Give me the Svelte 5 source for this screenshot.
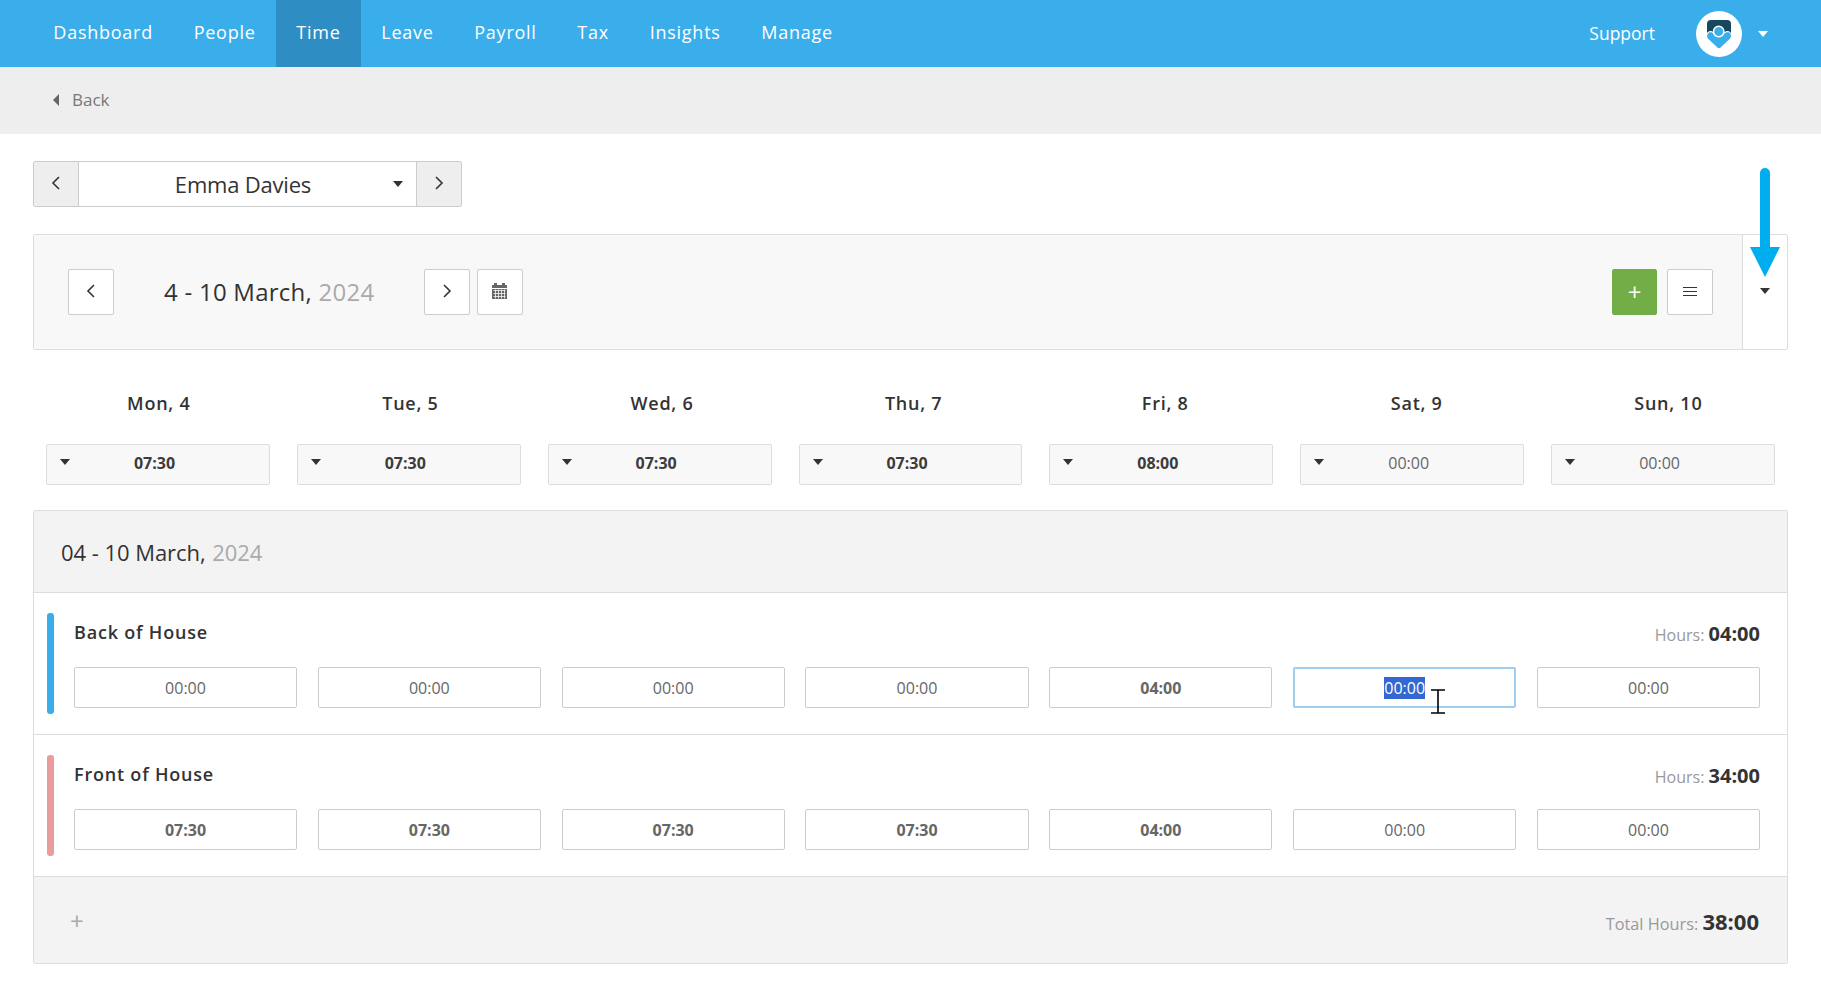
<script>
  const nav = ['Dashboard', 'People', 'Time', 'Leave', 'Payroll', 'Tax', 'Insights', 'Manage'];
  const days = [
    { label: 'Mon, 4', total: '07:30' },
    { label: 'Tue, 5', total: '07:30' },
    { label: 'Wed, 6', total: '07:30' },
    { label: 'Thu, 7', total: '07:30' },
    { label: 'Fri, 8', total: '08:00' },
    { label: 'Sat, 9', total: '00:00' },
    { label: 'Sun, 10', total: '00:00' }
  ];
  const rows = [
    { name: 'Back of House', color: '#3aaeeb', hours: '04:00', times: ['00:00', '00:00', '00:00', '00:00', '04:00', '00:00', '00:00'], selected: 5 },
    { name: 'Front of House', color: '#e89c9c', hours: '34:00', times: ['07:30', '07:30', '07:30', '07:30', '04:00', '00:00', '00:00'], selected: -1 }
  ];
</script>

<header class="topbar">
  <nav class="nav">
    {#each nav as item}
      <a class="nav-item" class:active={item === 'Time'} href="#top">{item}</a>
    {/each}
  </nav>
  <div class="account">
    <span class="support">Support</span>
    <span class="avatar">
      <svg width="46" height="46" viewBox="0 0 46 46">
        <circle cx="23" cy="23" r="23" fill="#fff" />
        <path d="M11 13q0-4 4-4h16q4 0 4 4v11H11z" fill="#17465f" />
        <path d="M10.500 25a4.500 4.500 0 0 1 4.500-4.500L23 24l8-3.500a4.500 4.500 0 0 1 4.500 4.500q0 2-1.500 3.500L25 37q-2 1.800-4 0l-9-8.500q-1.500-1.500-1.500-3.500z" fill="#3aaeeb" stroke="#fff" stroke-width="1.200" />
        <circle cx="22.700" cy="20.500" r="5.200" fill="#3aaeeb" stroke="#fff" stroke-width="1.500" />
      </svg>
    </span>
    <span class="caret white"></span>
  </div>
</header>

<div class="backbar"><span class="back-arrow"></span>Back</div>

<main class="page">
  <div class="employee">
    <button class="side-btn" aria-label="Previous"><svg width="10" height="14" viewBox="0 0 10 14"><path d="M8 1L2 7l6 6" /></svg></button>
    <div class="employee-name">Emma Davies<span class="caret small"></span></div>
    <button class="side-btn" aria-label="Next"><svg width="10" height="14" viewBox="0 0 10 14"><path d="M2 1l6 6-6 6" /></svg></button>
  </div>

  <section class="week">
    <div class="week-main">
      <button class="square" aria-label="Previous week"><svg width="10" height="14" viewBox="0 0 10 14"><path d="M8 1L2 7l6 6" /></svg></button>
      <h2 class="week-title">4 - 10 March, <span class="year">2024</span></h2>
      <button class="square" aria-label="Next week"><svg width="10" height="14" viewBox="0 0 10 14"><path d="M2 1l6 6-6 6" /></svg></button>
      <button class="square" aria-label="Calendar">
        <svg class="cal" width="15" height="16" viewBox="0 0 15 16">
          <path d="M2 0h3v2h5V0h3v2h2v3H0V2h2z" />
          <path d="M0 6h15v10H0z" />
          <path d="M1.500 7.500h12M1.500 10.500h12M1.500 13.500h12M3.500 6.500v9M6.500 6.500v9M9.500 6.500v9M12.500 6.500v9" />
        </svg>
      </button>
      <div class="week-actions">
        <button class="square green" aria-label="Add">+</button>
        <button class="square" aria-label="Menu"><svg class="lines" width="14" height="10" viewBox="0 0 14 10"><path d="M0 1h14M0 5h14M0 9h14" /></svg></button>
      </div>
    </div>
    <div class="week-side"><span class="caret"></span></div>
  </section>

  <div class="day-labels">
    {#each days as day}
      <div class="day-label">{day.label}</div>
    {/each}
  </div>
  <div class="days">
    {#each days as day}
      <div class="day-total" class:strong={day.total !== '00:00'}><span class="caret"></span>{day.total}</div>
    {/each}
  </div>

  <section class="panel">
    <div class="panel-head">04 - 10 March, <span class="year">2024</span></div>
    {#each rows as row}
      <div class="row">
        <span class="row-bar" style="background:{row.color}"></span>
        <div class="row-body">
          <div class="row-top">
            <span class="row-name">{row.name}</span>
            <span class="row-hours">Hours: <b>{row.hours}</b></span>
          </div>
          <div class="cells">
            {#each row.times as time, i}
              <div class="cell" class:strong={time !== '00:00'} class:focused={i === row.selected}>
                {#if i === row.selected}<span class="sel">{time}</span>{:else}{time}{/if}
              </div>
            {/each}
          </div>
        </div>
      </div>
    {/each}
    <div class="panel-foot">
      <span class="foot-add">+</span>
      <span class="total">Total Hours: <b>38:00</b></span>
    </div>
  </section>
</main>

<!-- annotation arrow and mouse cursor drawn over the screenshot -->
<svg class="arrow" width="30" height="110" viewBox="0 0 30 110">
  <path d="M15 5v80" stroke="#00aeef" stroke-width="10" stroke-linecap="round" />
  <path d="M0 79h30L15 109z" fill="#00aeef" />
</svg>
<svg class="ibeam" width="14" height="25" viewBox="0 0 14 25">
  <path d="M0 1h14M0 24h14M7 1v23" stroke="#000" stroke-width="1.600" fill="none" />
</svg>

<style>
  :global(body) {
    margin: 0;
    background: #fff;
    font-family: "Open Sans", "Noto Sans", sans-serif;
    color: #333;
  }
  button {
    font-family: inherit;
    padding: 0;
    cursor: pointer;
  }
  button svg path {
    stroke: #333;
    stroke-width: 1.600;
    fill: none;
  }
  button svg.lines {
    shape-rendering: crispEdges;
  }
  button svg.lines path {
    stroke: #333;
    stroke-width: 1;
  }
  button svg.cal {
    margin-right: 2px;
  }
  button svg.cal path:nth-child(-n+2) {
    stroke: none;
    fill: #666;
  }
  button svg.cal path:nth-child(3) {
    stroke: #f8f8f8;
    stroke-width: 0.800;
  }
  .topbar {
    height: 67px;
    background: #3aaeeb;
    display: flex;
    justify-content: space-between;
    align-items: center;
    color: #fff;
  }
  .nav {
    display: flex;
    padding-left: 33px;
    height: 100%;
  }
  .nav-item {
    display: flex;
    align-items: center;
    padding: 0 20.350px 3px;
    font-size: 18px;
    letter-spacing: 0.75px;
    color: #fff;
    text-decoration: none;
  }
  .nav-item.active {
    background: #2e8ec3;
  }
  .account {
    display: flex;
    align-items: center;
    padding-right: 53px;
  }
  .support {
    font-size: 17.500px;
    margin-right: 41px;
    padding-bottom: 2px;
  }
  .avatar {
    display: block;
    height: 46px;
    margin-right: 16px;
  }
  .caret {
    display: inline-block;
    border-left: 5px solid transparent;
    border-right: 5px solid transparent;
    border-top: 6px solid #333;
  }
  .caret.white {
    border-top-color: #fff;
  }
  .backbar {
    height: 67px;
    background: #eee;
    display: flex;
    align-items: center;
    padding: 0 0 2px 53px;
    box-sizing: border-box;
    font-size: 17px;
    color: #777;
  }
  .back-arrow {
    border-top: 6px solid transparent;
    border-bottom: 6px solid transparent;
    border-right: 6px solid #666;
    margin-right: 13px;
  }
  .page {
    padding: 27px 33px 0;
  }
  .employee {
    display: flex;
    width: 429px;
    height: 46px;
    border: 1px solid #ccc;
    border-radius: 2px;
    box-sizing: border-box;
  }
  .side-btn {
    width: 44px;
    border: 0;
    background: #eee;
    display: flex;
    align-items: center;
    justify-content: center;
    padding-bottom: 3px;
  }
  .employee-name {
    flex: 1;
    border-left: 1px solid #ccc;
    border-right: 1px solid #ccc;
    display: flex;
    align-items: center;
    justify-content: center;
    padding-right: 9px;
    font-size: 22px;
    letter-spacing: -0.2px;
    position: relative;
  }
  .caret.small {
    position: absolute;
    right: 13px;
    top: 19px;
  }
  .week {
    display: flex;
    height: 116px;
    margin-top: 27px;
    border: 1px solid #ddd;
    border-radius: 2px;
    box-sizing: border-box;
  }
  .week-main {
    flex: 1;
    background: #f8f8f8;
    display: flex;
    align-items: center;
    padding-left: 34px;
    padding-right: 29px;
  }
  .week-title {
    font-size: 24px;
    font-weight: 400;
    letter-spacing: 0.25px;
    margin: 0;
    width: 303px;
    padding-left: 43px;
    box-sizing: border-box;
    line-height: 1;
    white-space: nowrap;
  }
  .year {
    color: #aaa;
  }
  .square {
    width: 46px;
    height: 46px;
    background: #fff;
    border: 1px solid #ccc;
    border-radius: 2px;
    display: flex;
    align-items: center;
    justify-content: center;
    margin-right: 7px;
    padding-bottom: 3px;
  }
  .week-actions {
    margin-left: auto;
    display: flex;
    gap: 10px;
  }
  .week-actions .square {
    margin: 0;
  }
  .square.green {
    width: 45px;
    background: #72ad47;
    border-color: #72ad47;
    color: #fff;
    font-size: 24px;
    line-height: 1;
    padding: 0;
  }
  .week-side {
    width: 44px;
    border-left: 1px solid #ddd;
    display: flex;
    align-items: center;
    justify-content: center;
    padding-bottom: 2px;
  }
  .day-labels {
    display: grid;
    grid-template-columns: repeat(7, 251.600px);
    margin-top: 41px;
    height: 53px;
  }
  .day-label {
    font-size: 18px;
    font-weight: 600;
    letter-spacing: 0.75px;
    text-align: center;
    line-height: 24px;
  }
  .days {
    display: grid;
    grid-template-columns: repeat(7, 1fr);
    column-gap: 26.900px;
    padding: 0 13px;
  }
  .day-total {
    height: 41px;
    background: #f8f8f8;
    border: 1px solid #ddd;
    border-radius: 2px;
    box-sizing: border-box;
    display: flex;
    align-items: center;
    justify-content: center;
    padding: 0 7px 3px 0;
    font-size: 16px;
    color: #666;
    position: relative;
  }
  .day-total .caret {
    position: absolute;
    left: 13px;
    top: 14px;
  }
  .strong {
    font-weight: 700;
    color: #3c3c3c;
  }
  .panel {
    margin-top: 25px;
    border: 1px solid #ddd;
    border-radius: 2px;
  }
  .panel-head {
    height: 81px;
    background: #f3f3f3;
    display: flex;
    align-items: center;
    gap: 0.3em;
    padding-left: 27px;
    font-size: 22px;
    letter-spacing: -0.05px;
    border-bottom: 1px solid #ddd;
  }
  .row {
    display: flex;
    height: 142px;
    box-sizing: border-box;
    padding: 20px 27px 20px 13px;
    border-bottom: 1px solid #ddd;
  }
  .row-bar {
    width: 7px;
    border-radius: 3px;
    margin-right: 20px;
  }
  .row-body {
    flex: 1;
  }
  .row-top {
    display: flex;
    justify-content: space-between;
    align-items: center;
    height: 34px;
  }
  .row-name {
    font-size: 18px;
    font-weight: 600;
    letter-spacing: 0.8px;
    padding-top: 3px;
  }
  .row-hours {
    font-size: 16px;
    color: #999;
    padding-top: 6px;
  }
  .row-hours b {
    font-size: 20px;
    font-weight: 700;
    color: #333;
  }
  .cells {
    display: grid;
    grid-template-columns: repeat(7, 1fr);
    column-gap: 20.800px;
    margin-top: 20px;
  }
  .cell {
    height: 41px;
    border: 1px solid #ccc;
    border-radius: 2px;
    box-sizing: border-box;
    display: flex;
    align-items: center;
    justify-content: center;
    font-size: 16px;
    color: #666;
  }
  .cell.focused {
    border: 2px solid #a0cdee;
  }
  .sel {
    background: #3367d1;
    color: #fff;
    line-height: 22px;
  }
  .panel-foot {
    height: 86px;
    background: #f3f3f3;
    display: flex;
    justify-content: space-between;
    align-items: center;
    padding: 0 28px 0 36px;
  }
  .foot-add {
    font-size: 24px;
    color: #aaa;
  }
  .total {
    font-size: 16.300px;
    color: #999;
    padding-top: 2px;
  }
  .total b {
    font-size: 22px;
    font-weight: 700;
    color: #333;
  }
  .arrow {
    position: absolute;
    left: 1750px;
    top: 168px;
  }
  .ibeam {
    position: absolute;
    left: 1431px;
    top: 689px;
  }
</style>
